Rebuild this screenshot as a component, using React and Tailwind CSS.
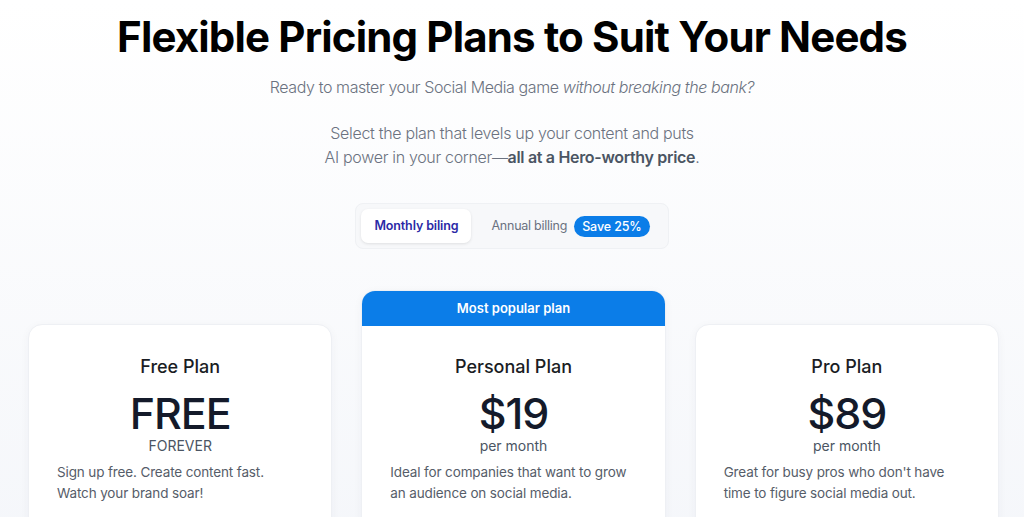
import React from 'react';

const plans = [
  { name: "Free Plan", price: "FREE", unit: "FOREVER", desc: "Sign up free. Create content fast. Watch your brand soar!" },
  { name: "Personal Plan", price: "$19", unit: "per month", desc: "Ideal for companies that want to grow an audience on social media.", popular: true },
  { name: "Pro Plan", price: "$89", unit: "per month", desc: "Great for busy pros who don't have time to figure social media out." },
];

const PlanCard = ({ plan }) => (
  <div className={`flex flex-col ${plan.popular ? '' : 'pt-[34px]'}`}>
    <div className="rounded-[14px] bg-white border border-[#eef0f4] shadow-[0_2px_10px_rgba(30,40,80,0.04)] overflow-hidden h-[260px]">
      {plan.popular && (
        <div className="bg-[#0b7de8] text-white text-[13px] font-semibold text-center h-[35px] leading-[35px]">
          Most popular plan
        </div>
      )}
      <div className={`px-7 ${plan.popular ? 'pt-[29px]' : 'pt-[30px]'}`}>
        <h3 className="text-center text-[18px] font-medium text-[#1a1d24] leading-6">{plan.name}</h3>
        <div className="text-center text-[43px] font-medium text-[#141a2a] leading-[48px] mt-[10px] tracking-tight">{plan.price}</div>
        <div className="text-center text-[14px] text-[#4b5563] leading-5 -mt-[1px]">{plan.unit}</div>
        <p className="text-[13.5px] text-[#565d69] leading-[21px] mt-[6px] tracking-[-0.01em]">{plan.desc}</p>
      </div>
    </div>
  </div>
);

const App = () => {
  return (
    <div className="min-h-screen w-full bg-gradient-to-b from-white to-[#f4f6fa] font-['Inter',sans-serif] overflow-hidden">
      <section className="pt-[11px] flex flex-col items-center text-center">
        <h1 className="text-[42px] font-bold text-black leading-[52px] tracking-[-0.02em]">
          Flexible Pricing Plans to Suit Your Needs
        </h1>
        <p className="mt-[12px] text-[16px] text-[#6b7280] font-light leading-6 tracking-[-0.025em]">
          Ready to master your Social Media game <em>without breaking the bank?</em>
        </p>
        <p className="mt-[22px] text-[16px] text-[#6b7280] font-light leading-6 tracking-[-0.02em]">
          Select the plan that levels up your content and puts<br />
          AI power in your corner—<strong className="font-semibold text-[#4b5563]">all at a Hero-worthy price</strong>.
        </p>

        <div className="mt-[34px] flex items-center gap-5 rounded-[8px] bg-[#f7f8fa] border border-[#eff1f4] p-[5px] pr-[18px]">
          <button className="bg-white rounded-[7px] shadow-[0_1px_3px_rgba(0,0,0,0.1)] h-[34px] px-[13px] text-[12.5px] font-semibold text-[#2b2aa6] tracking-[-0.01em]">
            Monthly biling
          </button>
          <div className="flex items-center gap-[7px]">
            <span className="text-[12.5px] text-[#6b7280] tracking-[-0.02em]">Annual billing</span>
            <span className="bg-[#0b7de8] text-white text-[12.5px] font-medium rounded-full px-[8px] h-[21px] leading-[21px] tracking-[-0.01em]">Save 25%</span>
          </div>
        </div>
      </section>

      <section className="mt-[41px] grid grid-cols-3 gap-[29px] pl-[28px] pr-[25px]">
        {plans.map((p) => (
          <PlanCard key={p.name} plan={p} />
        ))}
      </section>
    </div>
  );
};

export default App;
